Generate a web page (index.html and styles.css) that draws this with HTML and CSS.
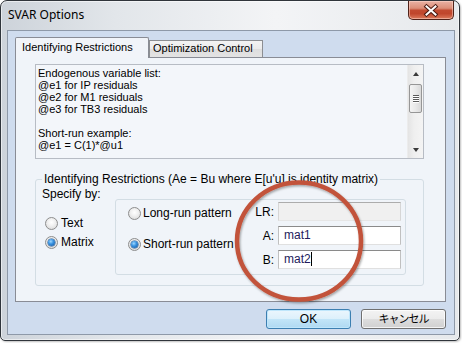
FILE: index.html
```html
<!DOCTYPE html>
<html>
<head>
<meta charset="utf-8">
<link rel="stylesheet" href="styles.css">
</head>
<body>
<div class="window">
  <div class="titlebar">
    <span class="title">SVAR Options</span>
    <div class="close">
      <svg width="44" height="17" viewBox="0 0 44 17">
        <path d="M17.5 4.5 L26.5 12.5 M26.5 4.5 L17.5 12.5" stroke="#4a1a12" stroke-width="4" stroke-linecap="square" fill="none"/>
        <path d="M17.5 4.5 L26.5 12.5 M26.5 4.5 L17.5 12.5" stroke="#ffffff" stroke-width="2" stroke-linecap="square" fill="none"/>
      </svg>
    </div>
  </div>
  <div class="client">
    <div class="tabs">
      <div class="tab active">Identifying Restrictions</div>
      <div class="tab inactive">Optimization Control</div>
    </div>
    <div class="panel">
      <div class="textarea">
        <div class="text">Endogenous variable list:
@e1 for IP residuals
@e2 for M1 residuals
@e3 for TB3 residuals

Short-run example:
@e1 = C(1)*@u1</div>
        <div class="scrollbar">
          <div class="sb-btn"><span class="tri-up"></span></div>
          <div class="thumb"><i></i><i></i><i></i><i></i></div>
          <div class="sb-space"></div>
          <div class="sb-btn"><span class="tri-down"></span></div>
        </div>
      </div>
      <fieldset class="group">
        <legend>Identifying Restrictions (Ae = Bu where E[u'u] is identity matrix)</legend>
        <div class="group-body">
          <div class="specify">
            <div class="specify-label">Specify by:</div>
            <div class="row first"><span class="radio"></span><span>Text</span></div>
            <div class="row"><span class="radio on"></span><span>Matrix</span></div>
          </div>
          <div class="inner">
            <div class="patterns">
              <div class="row"><span class="radio"></span><span>Long-run pattern</span></div>
              <div class="row"><span class="radio on"></span><span>Short-run pattern</span></div>
            </div>
            <div class="fields">
              <span class="flabel">LR:</span><div class="input disabled"></div>
              <span class="flabel">A:</span><div class="input">mat1</div>
              <span class="flabel">B:</span><div class="input">mat2<span class="caret"></span></div>
            </div>
          </div>
        </div>
      </fieldset>
    </div>
    <div class="buttons">
      <div class="btn ok">OK</div>
      <div class="btn cancel">キャンセル</div>
    </div>
  </div>
</div>
<svg class="annot" width="462" height="343" viewBox="0 0 462 343">
  <defs>
    <filter id="sh" x="-20%" y="-20%" width="140%" height="140%">
      <feDropShadow dx="1" dy="1.5" stdDeviation="1.2" flood-color="#000" flood-opacity="0.35"/>
    </filter>
  </defs>
  <ellipse cx="299" cy="241" rx="62" ry="58.5" fill="none" stroke="#c2533a" stroke-width="4.5" filter="url(#sh)"/>
</svg>
</body>
</html>
```
FILE: styles.css
```css
* { box-sizing: border-box; }
html, body { margin: 0; padding: 0; }
body {
  position: relative;
  width: 462px;
  height: 343px;
  overflow: hidden;
  background: #ffffff;
  font-family: "Liberation Sans", "Noto Sans CJK JP", sans-serif;
  font-size: 12px;
  color: #000;
}

.window {
  width: 460px;
  height: 341px;
  border: 1px solid #30353b;
  border-radius: 7px 7px 5px 5px;
  background: linear-gradient(90deg, #cdd3da 0%, #e2e6ea 25%, #f3f4f6 60%, #e6e9ec 100%);
  box-shadow: inset 0 0 0 1px rgba(255,255,255,0.55), 1px 1px 2px rgba(0,0,0,0.25);
  display: flex;
  flex-direction: column;
}

.titlebar {
  height: 29px;
  flex: none;
  display: flex;
  justify-content: space-between;
  align-items: flex-start;
  padding: 0 5px 0 7px;
}
.title {
  padding-top: 6px;
  font-family: "Noto Sans", "Liberation Sans", sans-serif;
  font-size: 12px;
  line-height: 15px;
  color: #000;
}
.close {
  width: 46px;
  height: 19px;
  border: 1px solid #4f2219;
  border-top: none;
  border-radius: 0 0 5px 5px;
  background: linear-gradient(180deg, #eab2a4 0%, #dc8e78 40%, #c24a30 52%, #c0462c 70%, #dc7a5c 100%);
  box-shadow: inset 0 0 0 1px rgba(255,220,210,0.5);
  display: flex;
  align-items: center;
  justify-content: center;
}
.close svg { display: block; }

.client {
  margin: 0 4px 0 6px;
  height: 305px;
  flex: none;
  background: #cfdcee;
  border: 1px solid #8e99a8;
  padding: 6px 8px 5px 7px;
  display: flex;
  flex-direction: column;
}

.tabs {
  display: flex;
  align-items: flex-end;
  height: 20px;
  flex: none;
  position: relative;
  z-index: 1;
}
.tab {
  font-size: 11px;
  line-height: 13px;
  border: 1px solid #898c95;
  border-bottom: none;
  white-space: nowrap;
}
.tab.active {
  width: 134px;
  height: 21px;
  margin-bottom: -1px;
  background: #f1f4f9;
  padding: 3px 0 0 6px;
  border-radius: 2px 2px 0 0;
}
.tab.inactive {
  width: 114px;
  height: 17px;
  padding: 1px 0 0 3px;
  border-color: #8c8e92;
  background: linear-gradient(180deg, #f3f3f3 0%, #ebebeb 50%, #dedede 51%, #e3e3e3 100%);
}

.panel {
  height: 245px;
  flex: none;
  border: 1px solid #898c95;
  background: #f0f4f9;
  padding: 6px 0 0 19px;
}

.textarea {
  width: 389px;
  height: 95px;
  border: 1px solid #b7bcc4;
  background: #f3f6fa;
  display: flex;
}
.text {
  flex: 1;
  padding: 2px 2px;
  font-size: 11px;
  line-height: 12px;
  white-space: pre;
  overflow: hidden;
}
.scrollbar {
  width: 16px;
  flex: none;
  display: flex;
  flex-direction: column;
  background: linear-gradient(90deg, #e4e4e4 0%, #efefef 40%, #f4f4f4 100%);
  border-left: 1px solid #ececec;
}
.sb-btn {
  height: 17px;
  flex: none;
  display: flex;
  align-items: center;
  justify-content: center;
}
.tri-up {
  width: 0; height: 0;
  border-left: 3.5px solid transparent;
  border-right: 3.5px solid transparent;
  border-bottom: 4px solid #3a3a3a;
}
.tri-down {
  width: 0; height: 0;
  border-left: 3.5px solid transparent;
  border-right: 3.5px solid transparent;
  border-top: 4px solid #3a3a3a;
}
.thumb {
  margin: 2px 1px 0 1px;
  height: 29px;
  flex: none;
  border: 1px solid #969696;
  border-radius: 2px;
  background: linear-gradient(90deg, #f4f4f4 0%, #e9e9e9 50%, #d9d9d9 100%);
  display: flex;
  flex-direction: column;
  align-items: center;
  justify-content: center;
  gap: 1px;
}
.thumb i {
  display: block;
  width: 6px;
  height: 1px;
  background: #5a5a5a;
  box-shadow: 0 1px 0 #ffffff;
}
.sb-space { flex: 1; }

.group {
  width: 389px;
  margin: 13px 0 0 0;
  padding: 2px 17px 10px 6px;
  border: 1px solid #d3dde4;
  border-radius: 3px;
  min-inline-size: 0;
}
.group legend {
  padding: 0 2px;
  margin: 0;
  font-size: 12px;
  line-height: 14px;
  white-space: nowrap;
}
.group-body {
  display: flex;
}
.specify {
  width: 73px;
  flex: none;
}
.specify-label {
  line-height: 12px;
}
.row {
  display: flex;
  align-items: center;
  gap: 3px;
  height: 15px;
  line-height: 15px;
  white-space: nowrap;
}
.specify .row { padding-left: 3px; margin-top: 4px; }
.specify .row.first { margin-top: 16px; }

.radio {
  width: 13px;
  height: 13px;
  flex: none;
  border-radius: 50%;
  border: 1px solid #8d8d8d;
  background: radial-gradient(circle at 50% 40%, #ffffff 0%, #f1f1f1 40%, #d4d4d4 100%);
  display: inline-grid;
  place-items: center;
}
.radio.on::after {
  content: "";
  width: 7px;
  height: 7px;
  border-radius: 50%;
  background: radial-gradient(circle at 40% 35%, #9fd8ff 0%, #3b94e2 40%, #0f4e96 100%);
  box-shadow: 0 0 0 0.5px #1d4f86;
}

.inner {
  width: 291px;
  height: 76px;
  flex: none;
  margin-top: 11px;
  border: 1px solid #d3dde4;
  border-radius: 3px;
  padding: 0 4px 0 12px;
  display: flex;
  justify-content: space-between;
}
.patterns {
  padding-top: 6px;
  display: flex;
  flex-direction: column;
  gap: 16px;
}
.patterns .row { gap: 2px; }

.fields {
  padding-top: 2px;
  display: grid;
  grid-template-columns: auto 123px;
  column-gap: 4px;
  row-gap: 5px;
  align-items: center;
  align-content: start;
}
.flabel {
  text-align: right;
  line-height: 14px;
}
.input {
  height: 19px;
  border: 1px solid;
  border-color: #8a8a8a #c0c0c0 #e0e0e0 #c0c0c0;
  background: #ffffff;
  padding: 0 5px;
  font-size: 12px;
  line-height: 17px;
  color: #221b5c;
  white-space: nowrap;
}
.input.disabled {
  background: #f0f0f0;
  border-color: #acacac #d6d6d6 #e6e6e6 #d6d6d6;
}
.caret {
  display: inline-block;
  width: 1px;
  height: 14px;
  background: #000;
  vertical-align: -3px;
}

.buttons {
  margin-top: 7px;
  display: flex;
  justify-content: flex-end;
  gap: 10px;
}
.btn {
  width: 85px;
  height: 20px;
  border: 1px solid #707070;
  border-radius: 3px;
  background: linear-gradient(180deg, #f3f3f3 0%, #ebebeb 50%, #dddddd 51%, #d1d1d1 100%);
  box-shadow: inset 0 0 0 1px rgba(255,255,255,0.75);
  display: flex;
  align-items: center;
  justify-content: center;
  font-size: 12px;
  line-height: 14px;
}
.btn.ok {
  border-color: #3c7fb1;
  background: linear-gradient(180deg, #ebf6fd 0%, #dcf0fb 50%, #c2e5f8 51%, #afd9f2 100%);
  box-shadow: inset 0 0 0 1px #bfe6fb;
}
.btn.cancel {
  font-size: 11px;
  letter-spacing: -1px;
}

.annot {
  position: absolute;
  left: 0;
  top: 0;
  pointer-events: none;
}
```
